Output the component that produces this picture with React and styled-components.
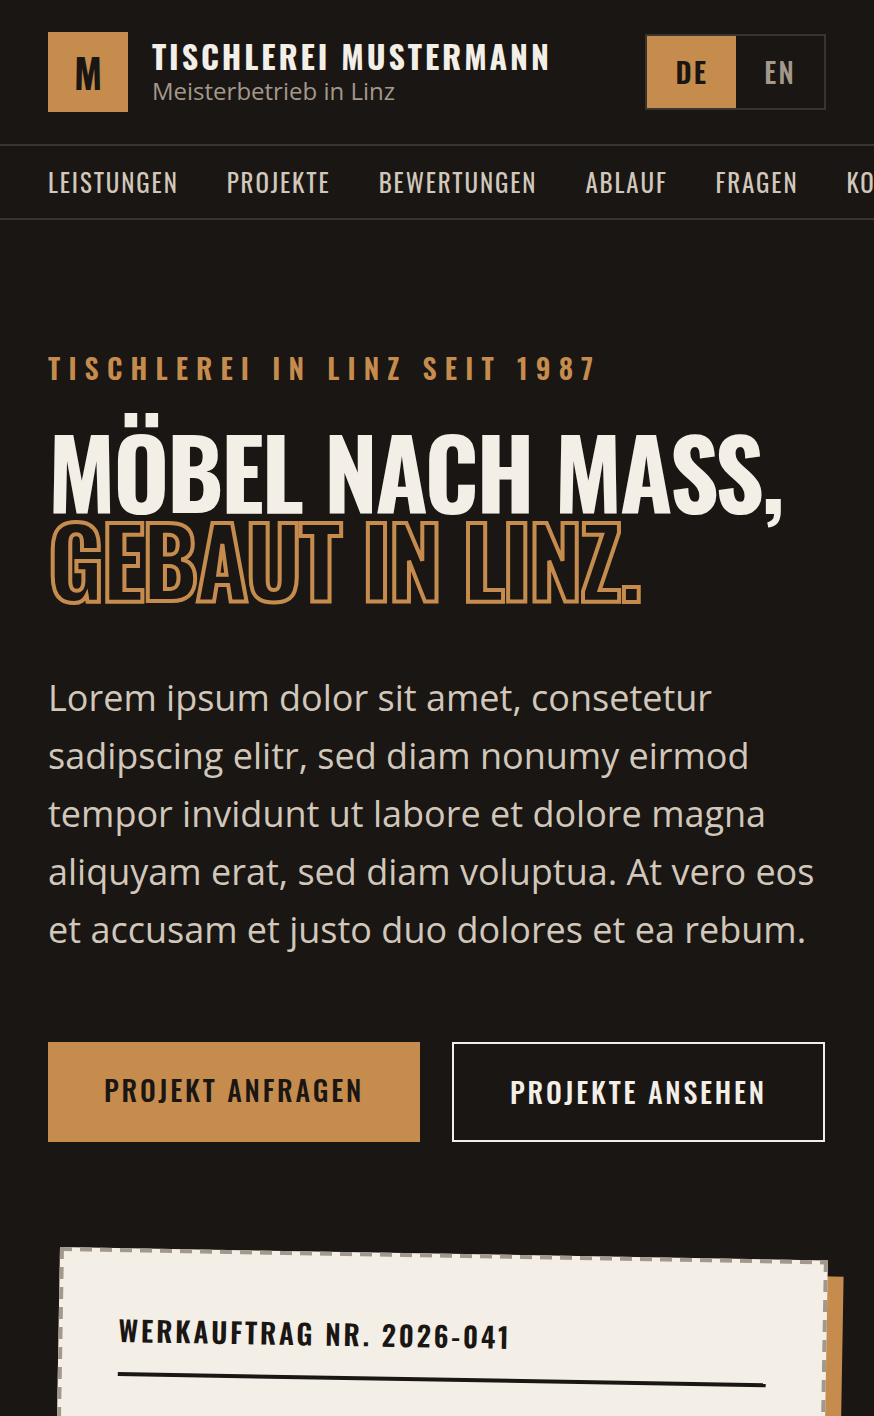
import { useState } from "react";
import styled, { createGlobalStyle, css } from "styled-components";

const GlobalStyle = createGlobalStyle`
   :root {
      --color-ink: #1a1613;
      --color-paper: #f3eee6;
      --color-copper: #c68c4e;
      --color-sand: #d1c7ba;
      --color-muted: #a3988c;
      --color-line: #3a342f;
      --font-head: "Oswald", "Roboto Condensed", sans-serif;
      --font-body: "Open Sans", "Noto Sans", sans-serif;
   }

   *, *::before, *::after {
      box-sizing: border-box;
   }

   body {
      margin: 0;
      overflow-x: hidden;
      background-color: var(--color-ink);
      color: var(--color-paper);
      font-family: var(--font-body);
   }
`;

const TopBar = styled.header`
   display: flex;
   align-items: center;
   justify-content: space-between;
   padding: 32px 48px;
   border-bottom: 2px solid var(--color-line);
`;

const Brand = styled.a`
   display: flex;
   align-items: center;
   gap: 24px;
   color: inherit;
   text-decoration: none;
`;

const Logo = styled.span`
   display: grid;
   place-items: center;
   width: 80px;
   height: 80px;
   background-color: var(--color-copper);
   color: var(--color-ink);
   font: 700 40px/48px var(--font-head);
`;

const BrandText = styled.span`
   display: flex;
   flex-direction: column;
`;

const BrandName = styled.span`
   font: 700 32px/38px var(--font-head);
   letter-spacing: 0.09em;
   text-transform: uppercase;
`;

const BrandClaim = styled.span`
   color: var(--color-muted);
   font-size: 24px;
   line-height: 32px;
`;

const LangSwitch = styled.div`
   display: flex;
   border: 2px solid var(--color-line);
`;

const LangButton = styled.button`
   padding: 16px 28px;
   border: 0;
   background: none;
   color: var(--color-muted);
   font: 500 28px/40px var(--font-head);
   letter-spacing: 0.08em;
   cursor: pointer;

   ${(props) => props.$active && css`
      background-color: var(--color-copper);
      color: var(--color-ink);
      font-weight: 600;
   `}
`;

const Nav = styled.nav`
   display: flex;
   gap: 48px;
   padding: 16px 48px;
   overflow: hidden;
   border-bottom: 2px solid var(--color-line);
`;

const NavLink = styled.a`
   flex: none;
   color: var(--color-sand);
   font: 400 25px/40px var(--font-head);
   letter-spacing: 0.075em;
   text-decoration: none;
   text-transform: uppercase;
`;

const Hero = styled.section`
   padding: 124px 48px 105px;
`;

const Eyebrow = styled.p`
   margin: 0 0 35px;
   color: var(--color-copper);
   font: 600 28px/48px var(--font-head);
   letter-spacing: 0.29em;
   text-transform: uppercase;
`;

const Title = styled.h1`
   margin: 0 0 66px;
   font: 700 96px/88px var(--font-head);
   letter-spacing: -0.025em;
   text-transform: uppercase;
`;

const Outline = styled.span`
   display: block;
   color: transparent;
   -webkit-text-stroke: 4px var(--color-copper);
`;

const Lead = styled.p`
   margin: 0 0 83px;
   color: var(--color-sand);
   font-size: 36px;
   line-height: 58px;
`;

const Actions = styled.div`
   display: flex;
   flex-wrap: wrap;
   gap: 32px;
`;

const ActionLink = styled.a`
   padding: 28px 56px;
   background-color: var(--color-copper);
   color: var(--color-ink);
   font: 500 28px/40px var(--font-head);
   letter-spacing: 0.1em;
   text-decoration: none;
   text-transform: uppercase;

   ${(props) => props.$ghost && css`
      border: 2px solid var(--color-paper);
      background: none;
      color: var(--color-paper);
   `}
`;

const TicketArea = styled.section`
   padding: 0 46px 96px 60px;
`;

const dash = (direction) =>
   `repeating-linear-gradient(${direction}, var(--color-muted) 0 12px, transparent 12px 20px)`;

/* dashed edge drawn with gradients, the native dashes are too short */
const Ticket = styled.article`
   min-height: 640px;
   padding: 60px;
   background:
      ${dash("to right")} top / 100% 4px no-repeat,
      ${dash("to right")} bottom / 100% 4px no-repeat,
      ${dash("to bottom")} left / 4px 100% no-repeat,
      ${dash("to bottom")} right / 4px 100% no-repeat,
      var(--color-paper);
   box-shadow: 16px 16px 0 var(--color-copper);
   color: var(--color-ink);
   transform: rotate(1deg);
   transform-origin: top left;
`;

const TicketTitle = styled.h2`
   margin: 0;
   padding-bottom: 20px;
   border-bottom: 4px solid var(--color-ink);
   font: 600 28px/44px var(--font-head);
   letter-spacing: 0.1em;
   text-transform: uppercase;
`;

const languages = ["DE", "EN"];

const links = [
   { href: "#leistungen", label: "Leistungen" },
   { href: "#projekte", label: "Projekte" },
   { href: "#bewertungen", label: "Bewertungen" },
   { href: "#ablauf", label: "Ablauf" },
   { href: "#fragen", label: "Fragen" },
   { href: "#kontakt", label: "Kontakt" },
];

function LanguageSwitch() {
   const [active, setActive] = useState("DE");

   return (
      <LangSwitch role="group" aria-label="Sprache">
         {languages.map((lang) => (
            <LangButton
               key={lang}
               type="button"
               $active={lang === active}
               aria-pressed={lang === active}
               onClick={() => setActive(lang)}
            >
               {lang}
            </LangButton>
         ))}
      </LangSwitch>
   );
}

function App() {
   return (
      <>
         <GlobalStyle />
         <TopBar>
            <Brand href="#">
               <Logo>M</Logo>
               <BrandText>
                  <BrandName>Tischlerei Mustermann</BrandName>
                  <BrandClaim>Meisterbetrieb in Linz</BrandClaim>
               </BrandText>
            </Brand>
            <LanguageSwitch />
         </TopBar>

         <Nav>
            {links.map((link) => (
               <NavLink key={link.href} href={link.href}>{link.label}</NavLink>
            ))}
         </Nav>

         <main>
            <Hero>
               <Eyebrow>Tischlerei in Linz seit 1987</Eyebrow>
               <Title>
                  Möbel nach Mass,
                  <Outline>gebaut in Linz.</Outline>
               </Title>
               <Lead>
                  Lorem ipsum dolor sit amet, consetetur sadipscing elitr, sed diam
                  nonumy eirmod tempor invidunt ut labore et dolore magna aliquyam
                  erat, sed diam voluptua. At vero eos et accusam et justo duo
                  dolores et ea rebum.
               </Lead>
               <Actions>
                  <ActionLink href="#kontakt">Projekt anfragen</ActionLink>
                  <ActionLink href="#projekte" $ghost>Projekte ansehen</ActionLink>
               </Actions>
            </Hero>

            <TicketArea>
               <Ticket>
                  <TicketTitle>Werkauftrag Nr. 2026-041</TicketTitle>
               </Ticket>
            </TicketArea>
         </main>
      </>
   );
}

export default App;
